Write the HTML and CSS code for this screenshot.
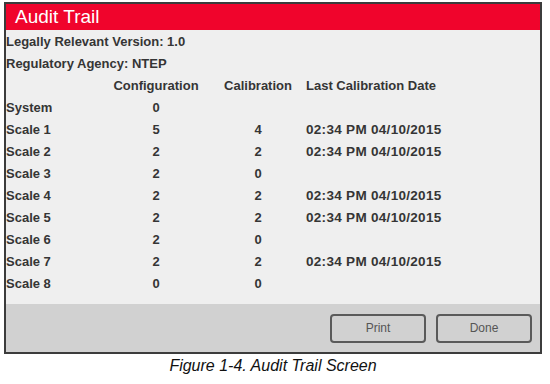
FILE: index.html
```html
<!DOCTYPE html>
<html lang="en">
<head>
  <meta charset="UTF-8" />
  <title>Audit Trail</title>
  <link rel="stylesheet" href="styles.css">
</head>
<body>
  <div class="screen">
    <div class="title-bar">Audit Trail</div>

    <div class="content">
      <div class="info">Legally Relevant Version: 1.0</div>
      <div class="info">Regulatory Agency: NTEP</div>

      <div class="audit-table">
        <div></div>
        <div class="num">Configuration</div>
        <div class="num">Calibration</div>
        <div>Last Calibration Date</div>

        <div>System</div>
        <div class="num">0</div>
        <div class="num"></div>
        <div></div>

        <div>Scale 1</div>
        <div class="num">5</div>
        <div class="num">4</div>
        <div class="date">02:34 PM 04/10/2015</div>

        <div>Scale 2</div>
        <div class="num">2</div>
        <div class="num">2</div>
        <div class="date">02:34 PM 04/10/2015</div>

        <div>Scale 3</div>
        <div class="num">2</div>
        <div class="num">0</div>
        <div></div>

        <div>Scale 4</div>
        <div class="num">2</div>
        <div class="num">2</div>
        <div class="date">02:34 PM 04/10/2015</div>

        <div>Scale 5</div>
        <div class="num">2</div>
        <div class="num">2</div>
        <div class="date">02:34 PM 04/10/2015</div>

        <div>Scale 6</div>
        <div class="num">2</div>
        <div class="num">0</div>
        <div></div>

        <div>Scale 7</div>
        <div class="num">2</div>
        <div class="num">2</div>
        <div class="date">02:34 PM 04/10/2015</div>

        <div>Scale 8</div>
        <div class="num">0</div>
        <div class="num">0</div>
        <div></div>
      </div>
    </div>

    <div class="footer">
      <button>Print</button>
      <button>Done</button>
    </div>
  </div>

  <p class="caption">Figure 1-4. Audit Trail Screen</p>
</body>
</html>
```

FILE: styles.css
```css
body {
  margin: 0;
  background: #fff;
  font-family: 'Liberation Sans', Arial, sans-serif;
}
.screen {
  margin: 2px 0 0 4px;
  width: 538px;
  height: 352px;
  box-sizing: border-box;
  border: 2px solid #3c3c3c;
  background: #efefef;
  display: flex;
  flex-direction: column;
}
.title-bar {
  height: 26px;
  line-height: 26px;
  background: #f0042c;
  color: #fff;
  font-size: 19px;
  padding-left: 9px;
}
.content {
  flex: 1;
  padding-top: 1px;
  font-size: 13px;
  font-weight: bold;
  color: #353535;
}
.info {
  height: 22px;
  line-height: 22px;
}
.audit-table {
  display: grid;
  grid-template-columns: 100px 100px 100px 1fr;
  grid-auto-rows: 22px;
  line-height: 22px;
}
.audit-table .num {
  text-align: center;
}
.audit-table .num:nth-child(4n+3) {
  padding-left: 4px;
}
.audit-table .date {
  font-size: 13.5px;
  letter-spacing: 0.3px;
}
.footer {
  height: 48px;
  background: #d1d1d1;
  display: flex;
  justify-content: flex-end;
  align-items: center;
  gap: 10px;
  padding-right: 8px;
}
.footer button {
  width: 96px;
  height: 29px;
  background: #d1d1d1;
  border: 2px solid #5a5a5a;
  border-radius: 4px;
  font-family: 'Liberation Sans', Arial, sans-serif;
  font-size: 12px;
  color: #555;
}
.caption {
  margin: 3px 0 0 4px;
  width: 538px;
  text-align: center;
  font-style: italic;
  font-size: 16px;
  color: #111;
}
```
